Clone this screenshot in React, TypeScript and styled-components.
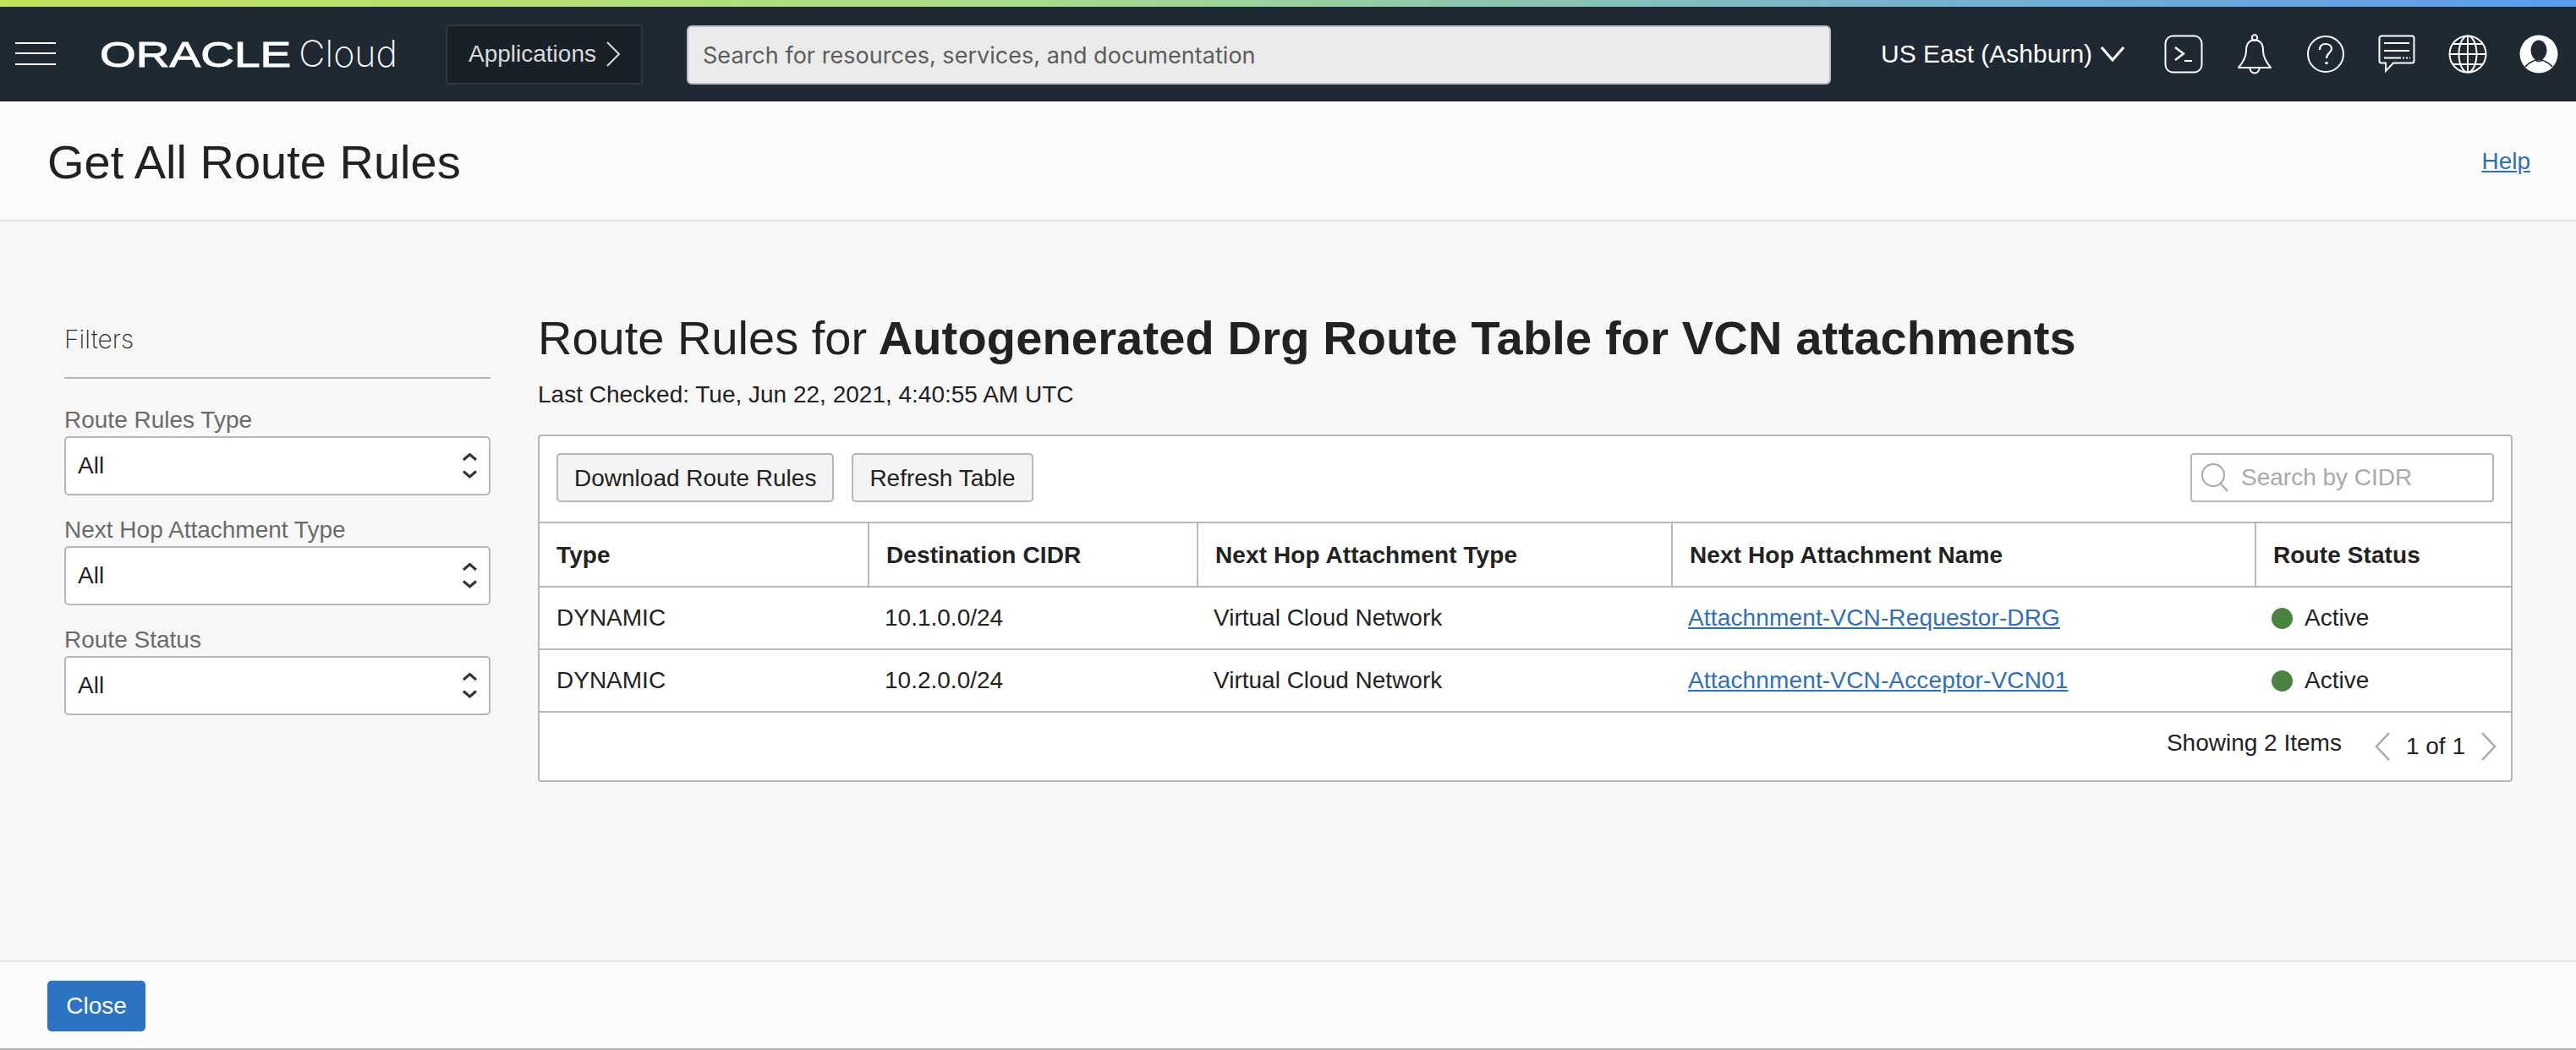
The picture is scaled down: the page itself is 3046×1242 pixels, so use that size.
import React from "react";
import styled, { createGlobalStyle } from "styled-components";

const GlobalStyle = createGlobalStyle`
  html, body {
    margin: 0;
    padding: 0;
    background: #f7f7f7;
  }
  * {
    box-sizing: border-box;
  }
`;

const Page = styled.div`
  display: flex;
  flex-direction: column;
  height: 1242px;
  font-family: "Liberation Sans", Arial, sans-serif;
  color: #222;
  background: #f7f7f7;
`;

const GradientBar = styled.div`
  height: 8px;
  flex: none;
  background: linear-gradient(90deg, #c2e25d 0%, #a9dc8a 40%, #7ab8c8 70%, #5a9cf0 100%);
`;

const Nav = styled.div`
  height: 112px;
  flex: none;
  display: flex;
  align-items: center;
  padding-left: 18px;
  background: #1f2933;
  color: #fff;
`;

const Hamburger = styled.div`
  width: 48px;
  height: 27px;
  margin-top: -2px;
  display: flex;
  flex-direction: column;
  justify-content: space-between;
  span {
    display: block;
    height: 2px;
    background: #fff;
  }
`;

const Logo = styled.div`
  width: 352px;
  margin-left: 52px;
  display: flex;
  align-items: baseline;
  white-space: nowrap;
`;

const LogoMark = styled.span`
  display: inline-block;
  width: 251px;
  font-size: 42px;
  font-weight: 400;
  line-height: 48px;
  -webkit-text-stroke: 1px #fff;
  transform: scaleX(1.31);
  transform-origin: left center;
`;

const LogoCloud = styled.span`
  font-family: Inter, sans-serif;
  font-weight: 200;
  font-size: 43px;
  line-height: 48px;
`;

const AppsButton = styled.div`
  width: 233px;
  height: 71px;
  margin-left: 57px;
  padding-left: 25px;
  display: flex;
  align-items: center;
  gap: 11px;
  background: #182028;
  border: 2px solid #2f3942;
  border-radius: 3px;
  font-size: 28px;
  color: #d8dadc;
`;

const NavSearch = styled.div`
  width: 1353px;
  height: 70px;
  margin-left: 52px;
  margin-top: 2px;
  padding-left: 17px;
  display: flex;
  align-items: center;
  background: #ebebeb;
  border: 2px solid #b9bec2;
  border-radius: 6px;
  font-family: Inter, sans-serif;
  font-size: 27px;
  letter-spacing: 0.03px;
  color: #5c5c5c;
`;

const Region = styled.div`
  width: 316px;
  margin-left: 59px;
  display: flex;
  align-items: center;
  gap: 10px;
  font-size: 30px;
  white-space: nowrap;
`;

const NavIcons = styled.div`
  display: flex;
`;

const NavIcon = styled.div`
  width: 84px;
  height: 50px;
  display: flex;
  align-items: center;
  justify-content: center;
`;

const PageHeader = styled.div`
  height: 142px;
  flex: none;
  padding: 2px 54px 0 56px;
  display: flex;
  align-items: center;
  justify-content: space-between;
  background: #fcfcfc;
  border-bottom: 2px solid #e4e4e4;
`;

const PageTitle = styled.h1`
  margin: 0;
  font-size: 56px;
  font-weight: 400;
  color: #222;
`;

const Link = styled.a`
  color: #2f6fb5;
  text-decoration: underline;
  font-size: 28px;
`;

const CellLink = styled(Link)`
  letter-spacing: 0.15px;
`;

const Main = styled.div`
  flex: 1;
  display: flex;
  gap: 56px;
  padding: 119px 75px 0 76px;
`;

const Sidebar = styled.div`
  width: 504px;
  flex: none;
`;

const FiltersTitle = styled.div`
  height: 67px;
  font-family: Inter, sans-serif;
  font-weight: 200;
  font-size: 30px;
  line-height: 40px;
  color: #2a2a2a;
  border-bottom: 2px solid #b3b5b9;
`;

const FilterGroup = styled.div`
  margin-top: 32px;
  & + & {
    margin-top: 24px;
  }
`;

const FilterLabel = styled.div`
  height: 36px;
  font-size: 28px;
  line-height: 34px;
  color: #6b6b6b;
`;

const SelectBox = styled.div`
  height: 70px;
  padding: 0 14px 0 14px;
  display: flex;
  align-items: center;
  justify-content: space-between;
  background: #fff;
  border: 2px solid #b5b7b9;
  border-radius: 5px;
  font-size: 28px;
  color: #222;
`;

const Content = styled.div`
  flex: 1;
  min-width: 0;
  margin-top: -13px;
`;

const Heading = styled.h2`
  margin: 0;
  font-size: 56px;
  font-weight: 400;
  line-height: 64px;
  color: #222;
  b {
    margin-left: -2px;
    font-weight: 700;
    letter-spacing: 0.16px;
  }
`;

const LastChecked = styled.div`
  margin-top: 17px;
  font-size: 28px;
  line-height: 36px;
  color: #222;
`;

const TableCard = styled.div`
  margin-top: 29px;
  background: #fff;
  border: 2px solid #b5b8ba;
  border-radius: 4px;
`;

const Toolbar = styled.div`
  height: 101px;
  padding: 20px 20px 0 20px;
  display: flex;
  align-items: flex-start;
  gap: 21px;
`;

const ToolButton = styled.div`
  height: 58px;
  padding: 2px 19px 0;
  display: flex;
  align-items: center;
  background: #f4f4f4;
  border: 2px solid #b5b8ba;
  border-radius: 5px;
  font-size: 28px;
  color: #222;
  white-space: nowrap;
`;

const TableSearch = styled.div`
  width: 359px;
  height: 58px;
  margin-left: auto;
  padding-left: 10px;
  display: flex;
  align-items: center;
  gap: 14px;
  border: 2px solid #b5b8ba;
  border-radius: 4px;
  font-size: 28px;
  color: #a9a9a9;
`;

const Row = styled.div<{ $height: number }>`
  height: ${(p) => p.$height}px;
  display: grid;
  grid-template-columns: 388px 389px 561px 690px 1fr;
  border-top: 2px solid #b5b8ba;
`;

const HeadCell = styled.div`
  padding: 2px 0 0 20px;
  display: flex;
  align-items: center;
  font-size: 28px;
  font-weight: 700;
  letter-spacing: 0.1px;
  color: #222;
  & + & {
    border-left: 2px solid #b5b8ba;
  }
`;

const Cell = styled.div`
  padding-left: 20px;
  display: flex;
  align-items: center;
  font-size: 28px;
  color: #222;
`;

const StatusDot = styled.span`
  width: 25px;
  height: 25px;
  margin-right: 14px;
  border-radius: 50%;
  background: #4a833d;
`;

const TableFooter = styled.div`
  height: 82px;
  padding: 0 16px 0 0;
  display: flex;
  align-items: center;
  justify-content: flex-end;
  border-top: 2px solid #b5b8ba;
  font-size: 28px;
  color: #222;
`;

const ShowingText = styled.span`
  margin-top: -8px;
  margin-right: 38px;
`;

const PageText = styled.span`
  margin: 0 18px;
`;

const PageFooter = styled.div`
  height: 106px;
  flex: none;
  padding: 22px 0 0 56px;
  background: #fcfcfc;
  border-top: 2px solid #e4e4e4;
  border-bottom: 2px solid #b0b0b0;
`;

const CloseButton = styled.div`
  width: 116px;
  height: 60px;
  display: flex;
  align-items: center;
  justify-content: center;
  background: #2d73c4;
  border-radius: 5px;
  font-size: 28px;
  color: #fff;
`;

const Chevrons = () => (
  <svg width="20" height="36" viewBox="0 0 20 36" fill="none" stroke="#333" strokeWidth="3">
    <path d="M4 11 L11.5 4.5 L19 11" />
    <path d="M4 24.5 L11.5 31 L19 24.5" />
  </svg>
);

const Pager = ({ dir }: { dir: "left" | "right" }) => (
  <svg width="20" height="34" viewBox="0 0 20 34" fill="none" stroke="#a8a8a8" strokeWidth="2.5">
    <path d={dir === "left" ? "M18 1 L3 17 L18 33" : "M2 1 L17 17 L2 33"} />
  </svg>
);

const filters = ["Route Rules Type", "Next Hop Attachment Type", "Route Status"];

const rows = [
  { cidr: "10.1.0.0/24", name: "Attachnment-VCN-Requestor-DRG" },
  { cidr: "10.2.0.0/24", name: "Attachnment-VCN-Acceptor-VCN01" },
];

export default function App() {
  return (
    <Page>
      <GlobalStyle />
      <GradientBar />
      <Nav>
        <Hamburger>
          <span />
          <span />
          <span />
        </Hamburger>
        <Logo>
          <LogoMark>ORACLE</LogoMark>
          <LogoCloud>Cloud</LogoCloud>
        </Logo>
        <AppsButton>
          Applications
          <svg width="18" height="30" viewBox="0 0 18 30" fill="none" stroke="#d8dadc" strokeWidth="2">
            <path d="M2 1 L16 15 L2 29" />
          </svg>
        </AppsButton>
        <NavSearch>Search for resources, services, and documentation</NavSearch>
        <Region>
          US East (Ashburn)
          <svg width="28" height="18" viewBox="0 0 28 18" fill="none" stroke="#fff" strokeWidth="3">
            <path d="M1 1 L14 16 L27 1" />
          </svg>
        </Region>
        <NavIcons>
          <NavIcon>
            <svg width="46" height="46" viewBox="0 0 46 46" fill="none" stroke="#fff" strokeWidth="2">
              <rect x="1.5" y="1.5" width="43" height="43" rx="9" />
              <path d="M13 15 L23 22.5 L13 30" strokeWidth="2.4" />
              <path d="M24 31 H33" strokeWidth="2" />
            </svg>
          </NavIcon>
          <NavIcon>
            <svg width="42" height="48" viewBox="0 0 42 48" fill="none" stroke="#fff" strokeWidth="2">
              <circle cx="21" cy="4.5" r="3.2" />
              <path d="M21 7.5 C29 7.5 31 14 31 20 C31 28 35 34 40 40 H2 C7 34 11 28 11 20 C11 14 13 7.5 21 7.5 Z" strokeLinejoin="round" />
              <path d="M15.5 41 A5.5 5.5 0 0 0 26.5 41" />
            </svg>
          </NavIcon>
          <NavIcon>
            <svg width="46" height="46" viewBox="0 0 46 46" fill="none" stroke="#fff" strokeWidth="2">
              <circle cx="23" cy="23" r="21" />
              <path d="M16 18 C16 13 19 11 23 11 C27 11 30 13.5 30 17 C30 21 24 22 24 28" strokeWidth="2.2" />
              <circle cx="24" cy="33.5" r="1.8" fill="#fff" stroke="none" />
            </svg>
          </NavIcon>
          <NavIcon>
            <svg width="44" height="46" viewBox="0 0 44 46" fill="none" stroke="#fff" strokeWidth="2">
              <path d="M4 1.5 H40 A2.5 2.5 0 0 1 42.5 4 V31 A2.5 2.5 0 0 1 40 33.5 H18 L9 43 V33.5 H4 A2.5 2.5 0 0 1 1.5 31 V4 A2.5 2.5 0 0 1 4 1.5 Z" />
              <path d="M7 10 H37 M7 19 H37 M7 27.5 H27" />
              <path d="M29 27.5 H38" strokeDasharray="2 2" />
            </svg>
          </NavIcon>
          <NavIcon>
            <svg width="46" height="46" viewBox="0 0 46 46" fill="none" stroke="#fff" strokeWidth="2">
              <circle cx="23" cy="23" r="21.5" />
              <ellipse cx="23" cy="23" rx="10.5" ry="21.5" />
              <path d="M23 1.5 V44.5 M1.5 23 H44.5 M5 11 H41 M5 35 H41" />
            </svg>
          </NavIcon>
          <NavIcon>
            <svg width="46" height="46" viewBox="0 0 46 46">
              <circle cx="23" cy="23" r="22.5" fill="#fff" />
              <ellipse cx="23" cy="18.5" rx="9.5" ry="12" fill="#1f2933" />
              <path d="M7 38 C11 33 15 32 19 30 Q23 33 27 30 C31 32 35 33 39 38" fill="none" stroke="#1f2933" strokeWidth="1.6" />
            </svg>
          </NavIcon>
        </NavIcons>
      </Nav>
      <PageHeader>
        <PageTitle>Get All Route Rules</PageTitle>
        <Link>Help</Link>
      </PageHeader>
      <Main>
        <Sidebar>
          <FiltersTitle>Filters</FiltersTitle>
          {filters.map((label) => (
            <FilterGroup key={label}>
              <FilterLabel>{label}</FilterLabel>
              <SelectBox>
                All
                <Chevrons />
              </SelectBox>
            </FilterGroup>
          ))}
        </Sidebar>
        <Content>
          <Heading>
            Route Rules for <b>Autogenerated Drg Route Table for VCN attachments</b>
          </Heading>
          <LastChecked>Last Checked: Tue, Jun 22, 2021, 4:40:55 AM UTC</LastChecked>
          <TableCard>
            <Toolbar>
              <ToolButton>Download Route Rules</ToolButton>
              <ToolButton>Refresh Table</ToolButton>
              <TableSearch>
                <svg width="34" height="34" viewBox="0 0 34 34" fill="none" stroke="#a9a9a9" strokeWidth="2">
                  <circle cx="15" cy="14" r="13" />
                  <path d="M24 24 L32 33" />
                </svg>
                Search by CIDR
              </TableSearch>
            </Toolbar>
            <Row $height={76}>
              <HeadCell>Type</HeadCell>
              <HeadCell>Destination CIDR</HeadCell>
              <HeadCell>Next Hop Attachment Type</HeadCell>
              <HeadCell>Next Hop Attachment Name</HeadCell>
              <HeadCell>Route Status</HeadCell>
            </Row>
            {rows.map((r) => (
              <Row $height={74} key={r.name}>
                <Cell>DYNAMIC</Cell>
                <Cell>{r.cidr}</Cell>
                <Cell>Virtual Cloud Network</Cell>
                <Cell>
                  <CellLink>{r.name}</CellLink>
                </Cell>
                <Cell>
                  <StatusDot />
                  Active
                </Cell>
              </Row>
            ))}
            <TableFooter>
              <ShowingText>Showing 2 Items</ShowingText>
              <Pager dir="left" />
              <PageText>1 of 1</PageText>
              <Pager dir="right" />
            </TableFooter>
          </TableCard>
        </Content>
      </Main>
      <PageFooter>
        <CloseButton>Close</CloseButton>
      </PageFooter>
    </Page>
  );
}
